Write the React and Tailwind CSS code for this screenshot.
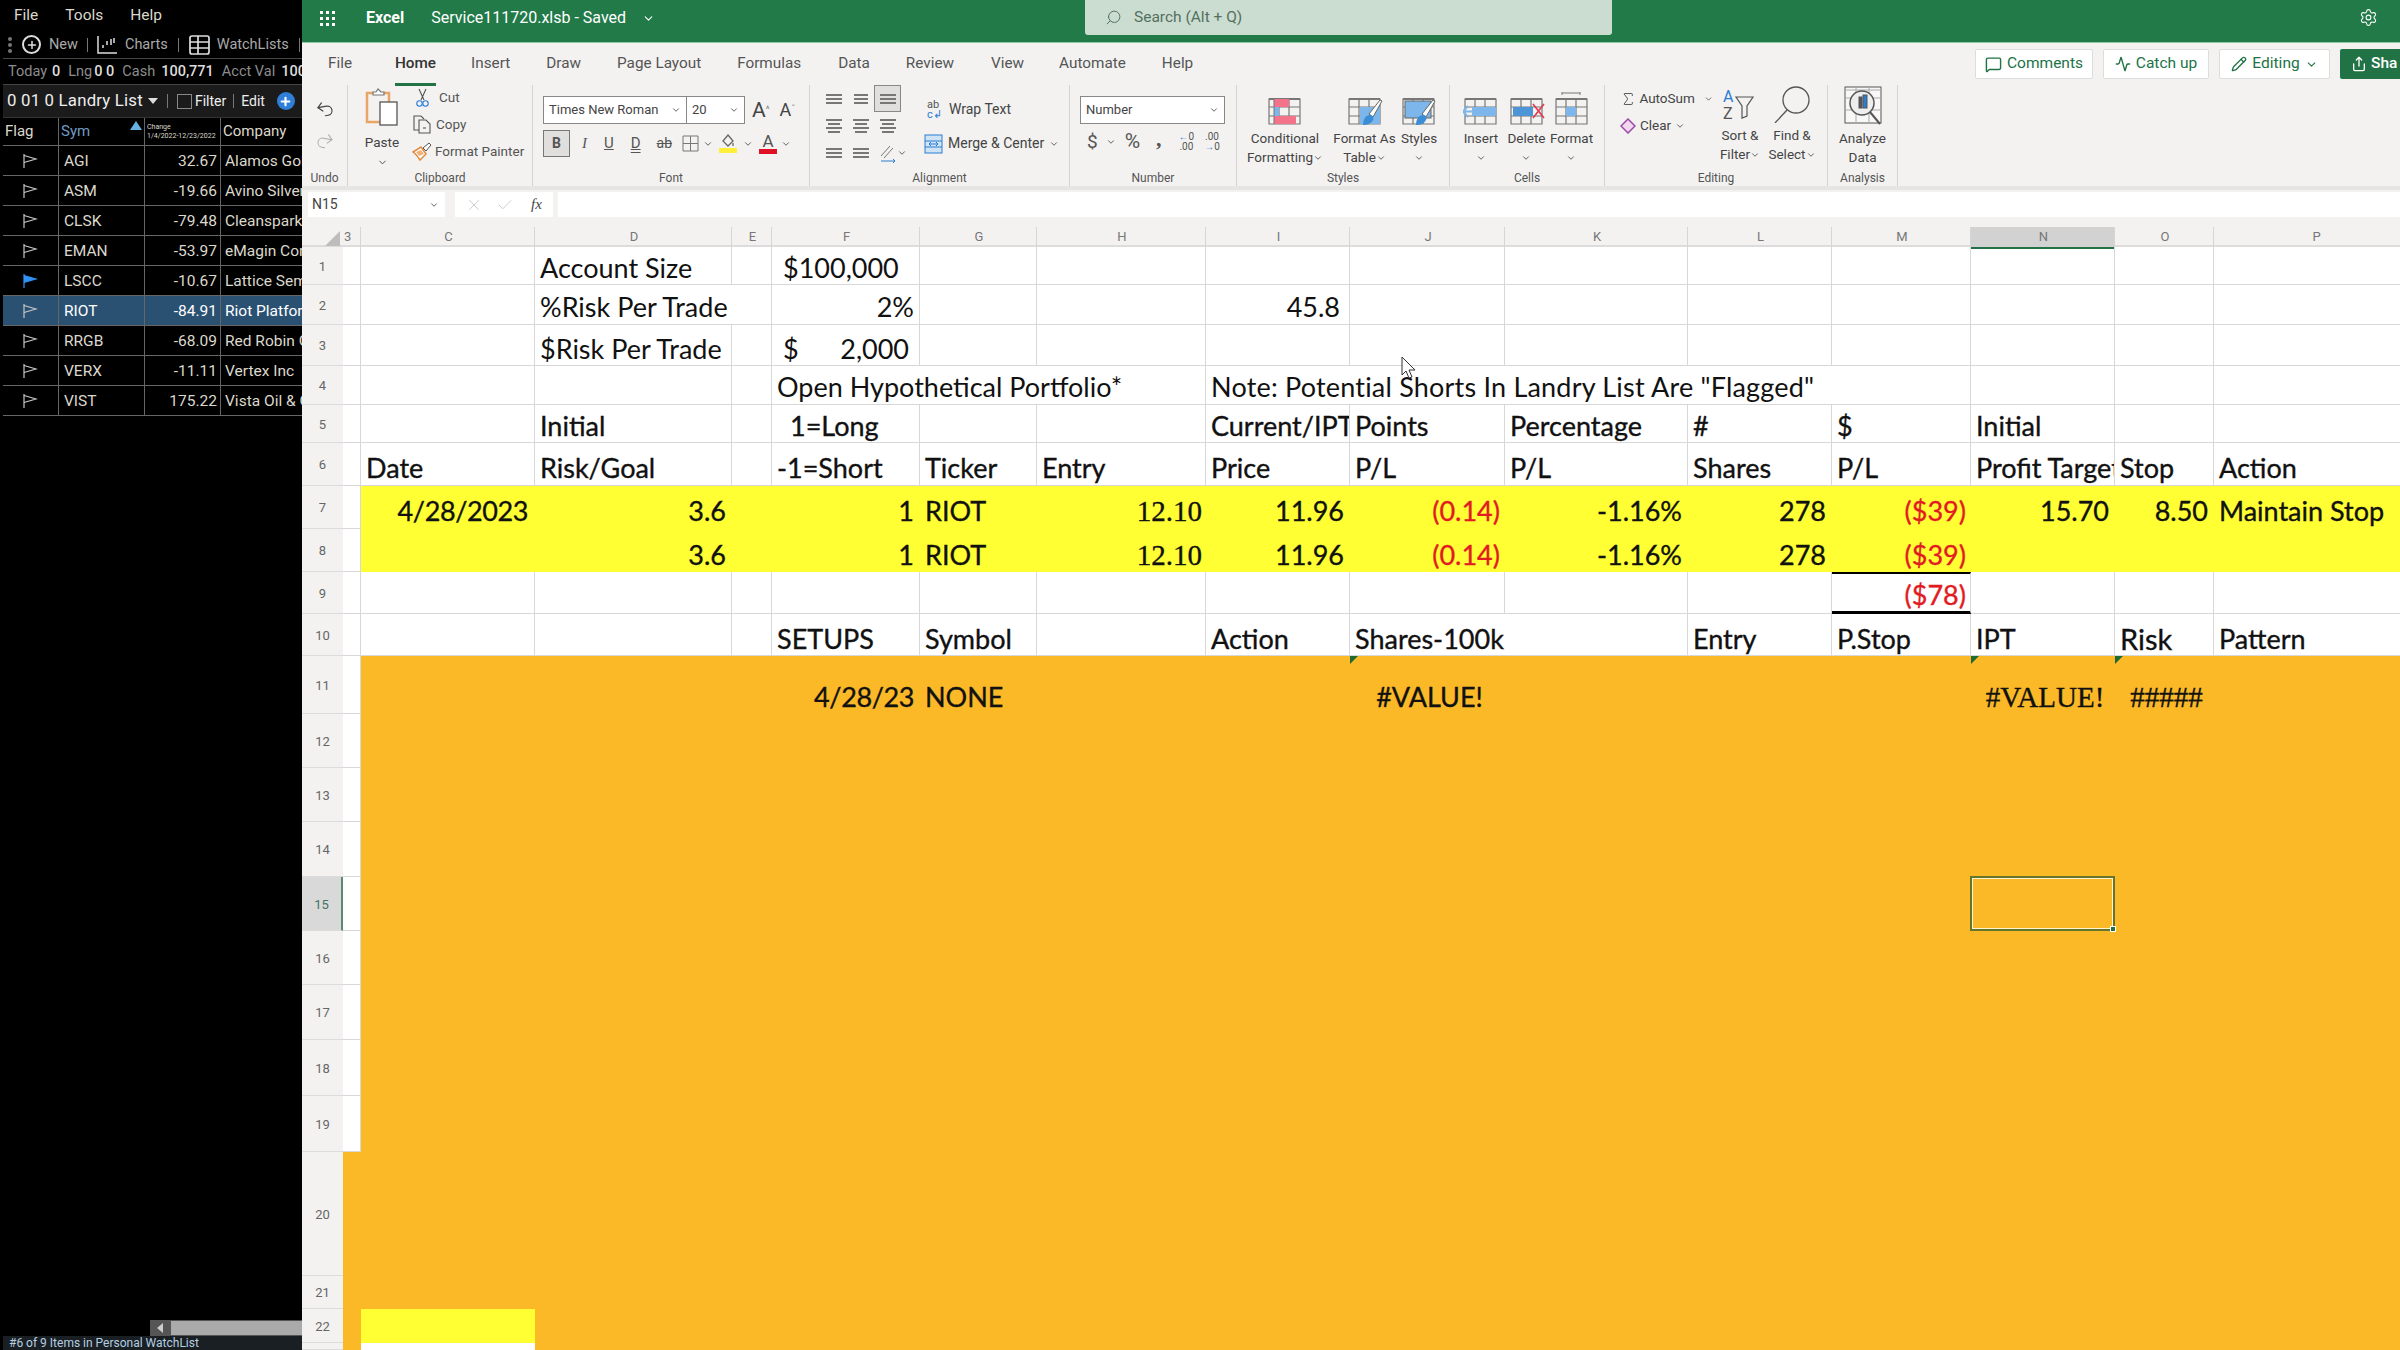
import { Fragment } from 'react';
import { Undo2, Redo2, Search, Settings, MessageSquare, Activity, Pencil, Share, ChevronDown, Check, X, Plus, Sigma } from 'lucide-react';

const watch = [
  ['AGI', '32.67', 'Alamos Gold Inc'],
  ['ASM', '-19.66', 'Avino Silver & Gold'],
  ['CLSK', '-79.48', 'Cleanspark Inc'],
  ['EMAN', '-53.97', 'eMagin Corp'],
  ['LSCC', '-10.67', 'Lattice Semiconductor'],
  ['RIOT', '-84.91', 'Riot Platforms Inc'],
  ['RRGB', '-68.09', 'Red Robin Gourmet'],
  ['VERX', '-11.11', 'Vertex Inc'],
  ['VIST', '175.22', 'Vista Oil & Gas'],
];

const Flag = ({ on }) => (
  <svg width="16" height="16" viewBox="0 0 16 16" fill={on ? '#2f93f5' : 'none'} stroke={on ? '#2f93f5' : '#c8c8c8'} strokeWidth="1.2">
    <path d="M2 1v14" />
    <path d="M2 2.5 14 6 2 9.5" />
  </svg>
);

const LeftPanel = () => (
  <div className="w-[302px] h-full shrink-0 bg-black flex flex-col text-[#dcd8cc] font-['Roboto',sans-serif] pl-[3px]">
    <div className="h-[31px] flex items-center text-[15.5px] gap-[27px] pl-[11px] pt-[1px]">
      <span>File</span><span>Tools</span><span>Help</span>
    </div>
    <div className="h-[28px] flex items-center text-[14.5px] text-[#a9a9a9] border-b border-[#444] pl-[5px]">
      <span className="flex flex-col gap-[2px] mr-[10px]"><i className="w-[4px] h-[4px] rounded-full bg-[#777]" /><i className="w-[4px] h-[4px] rounded-full bg-[#777]" /><i className="w-[4px] h-[4px] rounded-full bg-[#777]" /></span>
      <span className="w-[19px] h-[19px] rounded-full border-2 border-[#ddd] flex items-center justify-center mr-[8px]"><Plus size={12} strokeWidth={3} className="text-[#ddd]" /></span>
      <span>New</span>
      <span className="w-px h-[14px] bg-[#777] mx-[9px]" />
      <svg width="21" height="20" viewBox="0 0 21 20" fill="none" stroke="#ddd" strokeWidth="1.5" className="mr-[7px]"><path d="M1 1v17h19" /><path d="M6 13v-3M10 10V6M14 10V4M17 8V3" /></svg>
      <span>Charts</span>
      <span className="w-px h-[14px] bg-[#777] mx-[10px]" />
      <svg width="21" height="20" viewBox="0 0 21 20" fill="none" stroke="#ddd" strokeWidth="1.7" className="mr-[7px]"><rect x="1" y="1" width="19" height="18" rx="2" /><path d="M1 7h19M1 13h19M9 1v18" /></svg>
      <span>WatchLists</span>
      <span className="w-px h-[14px] bg-[#777] ml-[10px]" />
    </div>
    <div className="h-[26px] flex items-center text-[14.5px] text-[#8d8d8d] border-b border-[#444] pl-[5px] whitespace-nowrap overflow-hidden">
      <span>Today</span><b className="font-medium text-[#ddd] ml-[5px]">0</b>
      <span className="ml-[8px]">Lng</span><b className="font-medium text-[#ddd] ml-[2px]">0 0</b>
      <span className="ml-[8px]">Cash</span><b className="font-medium text-[#ddd] ml-[6px]">100,771</b>
      <span className="ml-[8px]">Acct Val</span><b className="font-medium text-[#ddd] ml-[6px]">100</b>
    </div>
    <div className="h-[33px] flex items-center bg-[#1b1b1b] border-b border-[#333] pl-[4px] text-[16.8px] text-[#eee] whitespace-nowrap overflow-hidden">
      <span className="tracking-[0.2px]">0 01 0 Landry List</span>
      <span className="ml-[5px] border-x-[5px] border-x-transparent border-t-[6px] border-t-[#ddd]" />
      <span className="w-px h-[14px] bg-[#777] mx-[9px]" />
      <span className="w-[15px] h-[15px] border border-[#888] mr-[3px]" />
      <span className="text-[14px]">Filter</span>
      <span className="w-px h-[14px] bg-[#777] mx-[7px]" />
      <span className="text-[14px]">Edit</span>
      <span className="ml-[12px] w-[18px] h-[18px] rounded-full bg-[#2f7fd8] flex items-center justify-center shrink-0"><Plus size={13} strokeWidth={4} className="text-white" /></span>
    </div>
    <div className="grid grid-cols-[56px_86px_76px_81px] h-[28px] border-b border-[#666] text-[15px] items-center">
      <span className="pl-[2px] h-full flex items-center border-r border-[#666]">Flag</span>
      <span className="pl-[2px] h-full flex items-center justify-between border-r border-[#666] text-[#6f9bc5] relative">Sym<i className="absolute right-[2px] top-[3px] border-x-[6px] border-x-transparent border-b-[9px] border-b-[#67b1e0]" /></span>
      <span className="pl-[2px] h-full flex flex-col justify-center border-r border-[#666] text-[7px] leading-[9px] whitespace-nowrap overflow-hidden"><span>Change</span><span>1/4/2022-12/23/2022</span></span>
      <span className="pl-[2px]">Company</span>
    </div>
    {watch.map(([sym, chg, co]) => (
      <div key={sym} className={`grid grid-cols-[56px_86px_76px_81px] h-[30px] border-b border-[#666] text-[15.5px] items-center whitespace-nowrap overflow-hidden ${sym === 'RIOT' ? 'bg-[#2b5172] text-white' : ''}`}>
        <span className="h-full flex items-center pl-[19px] border-r border-[#666]"><Flag on={sym === 'LSCC'} /></span>
        <span className="h-full flex items-center pl-[5px] pt-[2px] border-r border-[#666]">{sym}</span>
        <span className="h-full flex items-center justify-end pr-[3px] pt-[2px] border-r border-[#666]">{chg}</span>
        <span className="pl-[4px] pt-[2px] overflow-hidden">{co}</span>
      </div>
    ))}
    <div className="flex-1" />
    <div className="h-[16px] flex justify-end">
      <div className="w-[152px] bg-[#555] flex items-center">
        <span className="ml-[7px] border-y-[5px] border-y-transparent border-r-[6px] border-r-[#ccc]" />
        <span className="ml-[8px] flex-1 h-[14px] bg-[#aaa]" />
      </div>
    </div>
    <div className="h-[14px] bg-[#1a1f24] pl-[6px] text-[12px] leading-[14px] text-[#b5cfe0] whitespace-nowrap">#6 of 9 Items in Personal WatchList</div>
  </div>
);

const tabs = [
  ['File', 'ml-[26px]'], ['Home', 'ml-[43px]'], ['Insert', 'ml-[35px]'], ['Draw', 'ml-[36px]'], ['Page Layout', 'ml-[36px]'],
  ['Formulas', 'ml-[36px]'], ['Data', 'ml-[37px]'], ['Review', 'ml-[36px]'], ['View', 'ml-[37px]'], ['Automate', 'ml-[35px]'], ['Help', 'ml-[36px]'],
];

const Chev = ({ className = '' }) => <ChevronDown size={10} strokeWidth={2} className={`inline text-[#444] ${className}`} />;

const Group = ({ w, label, children }) => (
  <div className={`${w} h-[101px] shrink-0 flex flex-col border-r border-[#d6d4d2] mb-[2px]`}>
    <div className="flex-1 min-h-0 flex">{children}</div>
    <div className="h-[15px] text-center text-[12px] leading-[14px] text-[#555]">{label}</div>
  </div>
);

const BigBtn = ({ w, icon, lines, chev = true, up = '' }) => (
  <div className={`${w} ${up} flex flex-col items-center text-[13.5px] leading-[19px] text-[#444]`}>
    <div className="h-[41px] flex items-end justify-center">{icon}</div>
    <div className="mt-[3px] text-center whitespace-nowrap">
      {lines.map((l, i) => <div key={l}>{l}{i === lines.length - 1 && chev && lines.length > 1 ? <Chev /> : null}</div>)}
      {lines.length === 1 && chev ? <Chev /> : null}
    </div>
  </div>
);

const Lines = ({ rows, active }) => (
  <span className={`w-[27px] h-[27px] flex flex-col items-center justify-center gap-[2px] ${active ? 'bg-[#e1dfdd] border border-[#888]' : ''}`}>
    {rows.map((w, i) => <i key={i} className={`${w} h-[2px] bg-[#777]`} />)}
  </span>
);

// grid used by the big Styles and Cells buttons
const TableIcon = ({ children, top }) => (
  <svg width="36" height="34" viewBox="0 0 36 34" fill="none">
    {top}
    <path d="M2 7h31v25H2zM2 15h31M2 24h31M12 7v25M22 7v25" stroke="#777" strokeWidth="1.2" />
    <path d="M2 7h31" stroke="#777" strokeWidth="2" />
    {children}
  </svg>
);

const Brush = ({ d = 0 }) => (
  <g transform={`translate(${d} 0)`}>
    <path d="M22 22 33 8l2 1-9 16z" fill="#fff" stroke="#666" strokeWidth="1" />
    <path d="M16 33c0-6 3-10 7-10 3 0 4 3 3 5-2 4-6 5-10 5z" fill="#3b8ed6" />
  </g>
);

const Ribbon = () => (
  <div className="h-[143px] bg-[#f3f2f1] font-['Roboto',sans-serif] text-[#444]">
    <div className="h-[42px] flex items-center text-[15.3px] relative">
      {tabs.map(([t, m]) => (
        <span key={t} className={`${m} relative -mt-[2px] ${t === 'Home' ? 'font-medium text-[#333]' : 'text-[#555]'}`}>
          {t}
          {t === 'Home' && <i className="absolute left-0 right-0 -bottom-[12px] h-[3px] bg-[#217346]" />}
        </span>
      ))}
      <div className="ml-auto flex items-center gap-[10px] text-[15.5px] text-[#217346]">
        <span className="w-[118px] h-[30px] bg-white border border-[#ddd] rounded-[2px] flex items-center justify-center gap-[5px]"><MessageSquare size={17} />Comments</span>
        <span className="w-[106px] h-[30px] bg-white border border-[#ddd] rounded-[2px] flex items-center justify-center gap-[5px]"><Activity size={16} />Catch up</span>
        <span className="w-[111px] h-[30px] bg-white border border-[#ddd] rounded-[2px] flex items-center justify-center gap-[5px]"><Pencil size={16} />Editing<ChevronDown size={13} /></span>
        <span className="w-[60px] h-[30px] bg-[#217346] text-white rounded-l-[2px] flex items-center pl-[11px] gap-[4px] overflow-hidden font-medium"><Share size={16} className="shrink-0" />Sha</span>
      </div>
    </div>
    <div className="flex">
      <Group w="w-[46px]" label="Undo">
        <div className="flex flex-col items-center w-full pt-[14px] gap-[12px]"><Undo2 size={20} strokeWidth={1.4} className="text-[#444] -rotate-[10deg]" /><Redo2 size={20} strokeWidth={1.2} className="text-[#aaa] rotate-[10deg]" /></div>
      </Group>
      <Group w="w-[185px]" label="Clipboard">
        <div className="w-[64px] flex flex-col items-center text-[13.5px] pt-[2px] pl-[4px]">
          <svg width="34" height="40" viewBox="0 0 34 40" fill="none"><path d="M9 6H2v29h13" stroke="#eaa566" strokeWidth="2.5" /><path d="M18 6h6v9" stroke="#eaa566" strokeWidth="2.5" /><path d="M8 8V5h3l2-3 3 3h3v3z" fill="#fff" stroke="#777" strokeWidth="1.2" /><rect x="15" y="15" width="17" height="23" fill="#fff" stroke="#555" strokeWidth="1.3" /></svg>
          <span className="mt-[5px]">Paste</span><ChevronDown size={11} className="mt-[5px]" />
        </div>
        <div className="flex flex-col text-[13.5px] leading-[27px] -mt-[1px] whitespace-nowrap text-[#555]">
          <span className="flex items-center pl-[4px] gap-[10px]"><svg width="13" height="20" viewBox="0 0 13 20" fill="none" strokeWidth="1.1"><path d="M3 1l5 11M10 1 5 12" stroke="#555" /><circle cx="3.5" cy="15.5" r="2.7" stroke="#2b7cd3" /><circle cx="9.5" cy="15.5" r="2.7" stroke="#2b7cd3" /></svg>Cut</span>
          <span className="flex items-center gap-[4px] pl-[1px]"><svg width="19" height="19" viewBox="0 0 19 19" fill="none" stroke="#555" strokeWidth="1.1"><path d="M7 15H1V1h7l3 3" /><path d="M6 5h7l4 4v9H6z" fill="#f3f2f1" /><path d="M10 13h3" /></svg>Copy</span>
          <span className="flex items-center gap-[3px]"><svg width="20" height="19" viewBox="0 0 20 19" fill="none"><path d="M1 10 9 5l5 7-6 6C6 15 4 12 1 10z" fill="#fff" stroke="#e08a3e" strokeWidth="1.5" /><path d="M4 10 9 8l3 4-5 2z" fill="#f0b27a" /><path d="M11 6 17 1l2 2-5 6z" stroke="#555" fill="#fff" /></svg>Format Painter</span>
        </div>
      </Group>
      <Group w="w-[277px]" label="Font">
        <div className="pl-[10px] pt-[11px] flex flex-col gap-[6px]">
          <div className="flex items-center">
            <span className="w-[144px] h-[28px] bg-white border border-[#888] flex items-center justify-between px-[5px] text-[13px]">Times New Roman<Chev /></span>
            <span className="w-[58px] h-[28px] bg-white border border-l-0 border-[#888] flex items-center justify-between px-[5px] text-[13px]">20<Chev /></span>
            <span className="ml-[7px] text-[21px] leading-none">A<sup className="text-[9px] text-[#777]">^</sup></span>
            <span className="ml-[10px] text-[18px] leading-none">A<sup className="text-[9px] text-[#777]">ˇ</sup></span>
          </div>
          <div className="flex items-center text-[15px] text-[#555]">
            <span className="w-[27px] h-[27px] flex items-center justify-center bg-[#e1dfdd] border border-[#777] font-bold text-[14px]">B</span>
            <span className="ml-[12px] font-['Liberation_Serif',serif] italic">I</span>
            <span className="ml-[17px] underline">U</span>
            <span className="ml-[17px] underline decoration-double">D</span>
            <span className="ml-[16px] line-through text-[14px]">ab</span>
            <svg width="17" height="17" viewBox="0 0 17 17" fill="none" stroke="#777" className="ml-[10px]"><path d="M1 1h15v15H1zM1 8.500h15M8.500 1v15" /></svg>
            <Chev className="ml-[4px]" />
            <span className="ml-[6px] flex flex-col items-center"><svg width="16" height="14" viewBox="0 0 16 14" fill="none" stroke="#666" strokeWidth="1.3"><path d="M8 1 13 7 8 12 3 7zM13 9v3" /></svg><i className="w-[18px] h-[5px] bg-[#ffef3b]" /></span>
            <Chev className="ml-[6px]" />
            <span className="ml-[6px] flex flex-col items-center leading-[15px]"><span className="text-[17px]">A</span><i className="w-[18px] h-[5px] bg-[#e01025]" /></span>
            <Chev className="ml-[4px]" />
          </div>
        </div>
      </Group>
      <Group w="w-[260px]" label="Alignment">
        <div className="pl-[10px] grid grid-cols-[27px_27px_27px] content-start">
          <Lines rows={['w-[16px]', 'w-[16px]', 'w-[16px]']} />
          <Lines rows={['w-[14px]', 'w-[14px]', 'w-[14px]']} />
          <Lines rows={['w-[16px]', 'w-[16px]', 'w-[16px]']} active />
          <Lines rows={['w-[16px]', 'w-[12px]', 'w-[16px]', 'w-[12px]']} />
          <Lines rows={['w-[16px]', 'w-[12px]', 'w-[16px]', 'w-[12px]']} />
          <Lines rows={['w-[16px]', 'w-[12px]', 'w-[16px]', 'w-[12px]']} />
          <Lines rows={['w-[16px]', 'w-[16px]', 'w-[16px]']} />
          <Lines rows={['w-[16px]', 'w-[16px]', 'w-[16px]']} />
          <span className="flex items-center justify-center whitespace-nowrap"><svg width="18" height="20" viewBox="0 0 18 20" fill="none" stroke="#777"><path d="M2 13 11 3M5 15 14 5" /><path d="M2 18h14l-2-2M16 18l-2 2" stroke="#2b7cd3" /></svg><Chev className="-mr-[10px] shrink-0" /></span>
        </div>
        <div className="ml-[26px] pt-[14px] flex flex-col gap-[13px] text-[14px] whitespace-nowrap">
          <span className="flex items-center gap-[4px]"><span className="text-[11px] leading-[10px] text-[#555] w-[18px]">ab<br /><span className="text-[#2b7cd3]">c↲</span></span>Wrap Text</span>
          <span className="flex items-center gap-[5px] -ml-[3px]"><svg width="19" height="20" viewBox="0 0 19 20" fill="#cfe3f5" stroke="#2b7cd3"><rect x="1" y="1" width="17" height="18" /><path d="M1 7h17M1 13h17M5 10h9M5 10l2-2M5 10l2 2M14 10l-2-2M14 10l-2 2" fill="none" /></svg>Merge &amp; Center<Chev /></span>
        </div>
      </Group>
      <Group w="w-[167px]" label="Number">
        <div className="pl-[10px] pt-[11px] flex flex-col gap-[7px]">
          <span className="w-[145px] h-[28px] bg-white border border-[#888] flex items-center justify-between px-[5px] text-[13px]">Number<Chev /></span>
          <div className="flex items-center text-[#555] pl-[7px]">
            <span className="text-[19px] leading-none">$</span><Chev className="ml-[8px]" />
            <span className="ml-[9px] text-[21px] leading-none">%</span>
            <span className="ml-[16px] text-[22px] font-bold leading-none -mt-[5px] font-['Liberation_Serif',serif]">,</span>
            <span className="ml-[17px] text-[10px] leading-[10px] text-center"><span className="text-[#2b7cd3]">←</span>0<br />.00</span>
            <span className="ml-[10px] text-[10px] leading-[10px] text-center">.00<br /><span className="text-[#2b7cd3]">→</span>0</span>
          </div>
        </div>
      </Group>
      <Group w="w-[213px]" label="Styles">
        <BigBtn w="w-[96px]" lines={['Conditional', 'Formatting']} icon={<TableIcon><rect x="7" y="7" width="15" height="8" fill="#f4728a" /><rect x="7" y="15" width="5" height="9" fill="#7db6ea" /><rect x="7" y="24" width="22" height="8" fill="#f4728a" /><path d="M7 7v25" stroke="#777" /></TableIcon>} />
        <BigBtn w="w-[63px]" lines={['Format As', 'Table']} icon={<TableIcon><rect x="13" y="15" width="20" height="17" fill="#7db6ea" /><Brush /></TableIcon>} />
        <BigBtn w="w-[46px]" lines={['Styles']} icon={<TableIcon><rect x="4" y="9" width="26" height="17" fill="#7db6ea" stroke="#666" /><Brush d={-1} /></TableIcon>} />
      </Group>
      <Group w="w-[155px]" label="Cells">
        <div className="w-[8px]" />
        <BigBtn w="w-[46px]" lines={['Insert']} icon={<TableIcon><rect x="9" y="15" width="24" height="9" fill="#7db6ea" /><path d="M0 19.500h12M5 14l-5 5.500 5 5.500" stroke="#7db6ea" strokeWidth="2" /></TableIcon>} />
        <BigBtn w="w-[45px]" lines={['Delete']} icon={<TableIcon><rect x="4" y="15" width="20" height="9" fill="#4d95d6" /><path d="M24 12l11 14M35 12 24 26" stroke="#e2394f" strokeWidth="1.6" /></TableIcon>} />
        <BigBtn w="w-[45px]" lines={['Format']} icon={<TableIcon top={<path d="M8 1h18M8 0v3M26 0v3" stroke="#777" />}><rect x="12" y="15" width="10" height="9" fill="#7db6ea" /></TableIcon>} />
      </Group>
      <Group w="w-[223px]" label="Editing">
        <div className="w-[108px] pl-[15px] flex flex-col text-[13.5px] leading-[27px] whitespace-nowrap">
          <span className="flex items-center gap-[3px]"><Sigma size={18} strokeWidth={1.3} />AutoSum<Chev className="ml-[6px]" /></span>
          <span className="flex items-center gap-[4px]"><svg width="16" height="16" viewBox="0 0 16 16" fill="#f1d8ee" stroke="#9a4ba8" strokeWidth="1.5"><path d="M8 1 15 8 8 15 1 8z" /></svg>Clear<Chev /></span>
        </div>
        <BigBtn w="w-[54px]" up="-mt-[3px]" lines={['Sort &', 'Filter']} icon={<svg width="38" height="38" viewBox="0 0 38 38" fill="none"><text x="2" y="17" fontSize="16" fill="#2b7cd3" fontFamily="Roboto">A</text><text x="2" y="34" fontSize="16" fill="#555" fontFamily="Roboto">Z</text><path d="M15 12h17l-6 9v10l-5 2V21z" stroke="#555" strokeWidth="1.2" /></svg>} />
        <BigBtn w="w-[50px]" up="-mt-[3px]" lines={['Find &', 'Select']} icon={<svg width="38" height="38" viewBox="0 0 38 38" fill="none" stroke="#555" strokeWidth="1.3"><circle cx="23" cy="15" r="13" /><path d="M14 25 2 38" /></svg>} />
      </Group>
      <Group w="w-[70px]" label="Analysis">
        <BigBtn w="w-full" chev={false} lines={['Analyze', 'Data']} icon={<svg width="38" height="40" viewBox="0 0 38 40" fill="none" stroke="#555"><rect x="1" y="1" width="36" height="36" fill="#f8f8f8" /><path d="M1 4h36M1 12h36M1 24h36M12 1v36M25 1v36" stroke="#aaa" /><circle cx="18" cy="17" r="12" fill="#eee" strokeWidth="1.5" /><rect x="15" y="11" width="3" height="11" fill="#555" /><rect x="19" y="9" width="4" height="13" fill="#2b7cd3" /><path d="M26 26 36 38" strokeWidth="2" /></svg>} />
      </Group>
    </div>
  </div>
);

const FormulaBar = () => (
  <div className="h-[41px] bg-[#f3f2f1] border-t-4 border-[#e6e5e4] flex font-['Roboto',sans-serif] pt-[2px] pb-[10px] pl-[6px] text-[14px] text-[#444]">
    <span className="w-[137px] bg-white flex items-center justify-between px-[4px]">N15<Chev className="mr-[2px]" /></span>
    <span className="ml-[10px] w-[98px] bg-white flex items-center pl-[10px] gap-[13px] text-[#bbb]"><X size={18} strokeWidth={1} /><Check size={18} strokeWidth={1} /><em className="font-['Liberation_Serif',serif] text-[#444] text-[15px] ml-[4px]">fx</em></span>
    <span className="ml-[5px] flex-1 bg-white" />
  </div>
);

const gridCols = 'grid grid-cols-[41px_18px_174px_197px_40px_148px_117px_169px_144px_155px_183px_144px_139px_144px_99px_204px]';
const cols = ['B', 'C', 'D', 'E', 'F', 'G', 'H', 'I', 'J', 'K', 'L', 'M', 'N', 'O', 'P'];
const spans = { 2: 'col-span-2', 3: 'col-span-3', 5: 'col-span-5' };
const red = 'text-[#e21b23] justify-end pr-[4px]';
const right = 'justify-end pr-[5px]';
const serif = "font-['Liberation_Serif',serif]";
const entry = `justify-end pr-[3px] text-[29px] ${serif}`;
const hash = `justify-center text-[29px] leading-[30px] !pb-0 [-webkit-text-stroke:0.5px_#111] ${serif}`;

const ColHeads = () => (
  <div className={`${gridCols} h-[20px] bg-[#f3f2f1] border-b-2 border-[#dcdcdc] text-[13px] text-[#777] font-['Roboto',sans-serif] text-center leading-[20px]`}>
    <span className="flex justify-end items-end pr-[3px] pb-[1px]"><i className="border-l-[15px] border-l-transparent border-b-[15px] border-b-[#bdbdbd]" /></span>
    <span className="border-r border-[#d6d6d6] text-left pl-[1px] overflow-hidden">3</span>
    {cols.slice(1).map((c) => (
      <span key={c} className={`border-r border-[#d6d6d6] pl-[2px] ${c === 'N' ? 'bg-[#d2d2d2] border-b-2 border-b-[#217346] -mb-[2px]' : ''}`}>{c}</span>
    ))}
  </div>
);

const rows = [
  { n: 1, h: 'h-[38px]', cells: { D: { t: 'Account Size' }, F: { t: '$100,000', c: 'pl-[11px]' } } },
  { n: 2, h: 'h-[40px]', lift: true, cells: { D: { t: '%Risk Per Trade', s: 2 }, F: { t: '2%', c: 'justify-end pr-[5px]' }, I: { t: '45.8', c: 'justify-end pr-[9px]' } } },
  { n: 3, h: 'h-[41px]', cells: { D: { t: '$Risk Per Trade' }, F: { t: <span className="flex justify-between w-full pl-[6px] pr-[10px]"><span>$</span><span>2,000</span></span> } } },
  { n: 4, h: 'h-[39px]', lift: true, cells: { F: { t: 'Open Hypothetical Portfolio*', s: 3 }, I: { t: 'Note: Potential Shorts In Landry List Are "Flagged"', s: 5, c: 'tracking-[0.2px]' } } },
  { n: 5, h: 'h-[38px]', b: true, cells: { D: { t: 'Initial' }, F: { t: '1=Long', c: 'pl-[18px]' }, I: { t: 'Current/IPT' }, J: { t: 'Points' }, K: { t: 'Percentage' }, L: { t: '#' }, M: { t: '$' }, N: { t: 'Initial' } } },
  { n: 6, h: 'h-[43px]', b: true, lift: true, cells: { C: { t: 'Date' }, D: { t: 'Risk/Goal' }, F: { t: '-1=Short' }, G: { t: 'Ticker' }, H: { t: 'Entry' }, I: { t: 'Price' }, J: { t: 'P/L' }, K: { t: 'P/L' }, L: { t: 'Shares' }, M: { t: 'P/L' }, N: { t: 'Profit Target' }, O: { t: 'Stop' }, P: { t: 'Action' } } },
  { n: 7, h: 'h-[43px]', fill: 'y', b: true, lift: true, cells: { C: { t: '4/28/2023', c: 'justify-end pr-[6px] tracking-[-0.4px]' }, D: { t: '3.6', c: right }, F: { t: '1', c: right }, G: { t: 'RIOT' }, H: { t: '12.10', c: entry }, I: { t: '11.96', c: right }, J: { t: '(0.14)', c: red }, K: { t: '-1.16%', c: right }, L: { t: '278', c: right }, M: { t: '($39)', c: red }, N: { t: '15.70', c: right }, O: { t: '8.50', c: right }, P: { t: 'Maintain Stop' } } },
  { n: 8, h: 'h-[43px]', fill: 'y', b: true, cells: { D: { t: '3.6', c: right }, F: { t: '1', c: right }, G: { t: 'RIOT' }, H: { t: '12.10', c: entry }, I: { t: '11.96', c: right }, J: { t: '(0.14)', c: red }, K: { t: '-1.16%', c: right }, L: { t: '278', c: right }, M: { t: '($39)', c: red } } },
  { n: 9, h: 'h-[42px]', b: true, cells: { M: { t: '($78)', c: `${red} !border-t-2 !border-t-black !border-b-[3px] !border-b-black [border-bottom-style:double]` } } },
  { n: 10, h: 'h-[42px]', b: true, cells: { F: { t: 'SETUPS' }, G: { t: 'Symbol' }, I: { t: 'Action' }, J: { t: 'Shares-100k', s: 2 }, L: { t: 'Entry' }, M: { t: 'P.Stop' }, N: { t: 'IPT' }, O: { t: 'Risk', c: 'text-[29px]' }, P: { t: 'Pattern' } } },
  { n: 11, h: 'h-[58px]', fill: 'o', b: true, cells: { F: { t: '4/28/23', c: 'justify-end pr-[5px] tracking-[-0.4px]' }, G: { t: 'NONE' }, J: { t: '#VALUE!', c: 'justify-center text-[26px]', tri: true }, N: { t: '#VALUE!', c: hash, tri: true }, O: { t: '#####', c: hash, tri: true } } },
  { n: 12, h: 'h-[54px]', fill: 'o', cells: {} },
  { n: 13, h: 'h-[54px]', fill: 'o', cells: {} },
  { n: 14, h: 'h-[55px]', fill: 'o', cells: {} },
  { n: 15, h: 'h-[54px]', fill: 'o', sel: true, cells: {} },
  { n: 16, h: 'h-[54px]', fill: 'o', cells: {} },
  { n: 17, h: 'h-[55px]', fill: 'o', cells: {} },
  { n: 18, h: 'h-[56px]', fill: 'o', cells: {} },
  { n: 19, h: 'h-[56px]', fill: 'o', cells: {} },
  { n: 20, h: 'h-[124px]', fill: 'o', bo: true, cells: {} },
  { n: 21, h: 'h-[33px]', fill: 'o', bo: true, cells: {} },
  { n: 22, h: 'h-[34px]', fill: 'o', bo: true, cells: { C: { t: '', c: '!bg-[#ffff33]' } } },
  { n: '', h: 'h-[7px]', fill: 'o', bo: true, cells: { C: { t: '', c: '!bg-white ml-[1px]' } } },
];

const SheetRow = ({ n, h, fill, bo, b, sel, lift, cells }) => {
  const bg = fill === 'y' ? 'bg-[#ffff33] border-transparent' : fill === 'o' ? 'bg-[#fbb927] border-transparent' : 'border-[#d8d8d8]';
  let skip = 0;
  return (
    <div className={`${gridCols} ${h}`}>
      <span className={`flex items-center justify-center pt-[2px] border-b border-[#dcdcdc] text-[13px] font-['Roboto',sans-serif] ${sel ? 'bg-[#d9d9d9] text-[#3f7564] border-r-2 border-r-[#5a8a72]' : 'bg-[#f3f2f1] text-[#666]'}`}>{n}</span>
      {cols.map((col) => {
        if (skip > 0) { skip -= 1; return null; }
        const cell = cells[col] || {};
        if (cell.s) skip = cell.s - 1;
        const base = col === 'B' ? (bo ? 'bg-[#fbb927] border-transparent' : 'border-[#d8d8d8]') : bg;
        const isSel = sel && col === 'N';
        return (
          <div key={col} className={`relative flex items-end pl-[5px] whitespace-nowrap border-r border-b text-[27px] leading-[32px] ${isSel ? 'overflow-visible z-10' : 'overflow-hidden'} ${lift ? 'pb-[1px]' : ''} ${base} ${spans[cell.s] || ''} ${b ? '[-webkit-text-stroke:0.35px_currentColor]' : ''} ${cell.c || ''}`}>
            {cell.tri && <i className="absolute left-0 top-0 border-r-[8px] border-r-transparent border-t-[8px] border-t-[#1d6b30]" />}
            {cell.t}
            {isSel && (
              <Fragment>
                <i className="absolute -inset-[1px] border-2 border-[#66752c]" />
                <i className="absolute inset-[1px] border border-[#fdf3d0]" />
                <i className="absolute -right-[2px] -bottom-[2px] w-[6px] h-[6px] bg-[#217346] border border-white" />
              </Fragment>
            )}
          </div>
        );
      })}
    </div>
  );
};

export default function App() {
  return (
    <div className="w-[2400px] h-[1350px] overflow-hidden flex bg-white text-[#111] font-['Lato',sans-serif]">
      <LeftPanel />
      <div className="flex-1 min-w-0 flex flex-col relative overflow-hidden">
        <div className="h-[43px] bg-[#217a47] border-b border-[#8fcba6] flex items-center pb-[6px] text-white font-['Roboto',sans-serif] relative">
          <span className="ml-[18px] grid grid-cols-3 gap-[3px]">
            {[0, 1, 2, 3, 4, 5, 6, 7, 8].map((d) => <i key={d} className="w-[3px] h-[3px] bg-white" />)}
          </span>
          <span className="ml-[31px] text-[16px] font-bold">Excel</span>
          <span className="ml-[27px] text-[16px]">Service111720.xlsb  -  Saved</span>
          <ChevronDown size={13} className="ml-[16px]" />
          <div className="absolute left-[783px] top-0 w-[527px] h-[35px] bg-[#cbddd1] rounded-b-[3px] flex items-center pl-[20px] gap-[12px] text-[#55705f] text-[15.5px]">
            <Search size={17} strokeWidth={1.4} className="-scale-x-100" />Search (Alt + Q)
          </div>
          <Settings size={19} strokeWidth={1.4} className="absolute right-[22px] top-[8px]" />
        </div>
        <Ribbon />
        <FormulaBar />
        <ColHeads />
        <div className="flex-1 overflow-hidden">
          {rows.map((r) => <SheetRow key={r.n || 'last'} {...r} />)}
        </div>
        <svg width="16" height="24" viewBox="0 0 16 24" fill="#fff" stroke="#333" className="absolute left-[1099px] top-[356px]"><path d="M1 1v18l4-4 3 7 3-1-3-7h6z" /></svg>
      </div>
    </div>
  );
}
